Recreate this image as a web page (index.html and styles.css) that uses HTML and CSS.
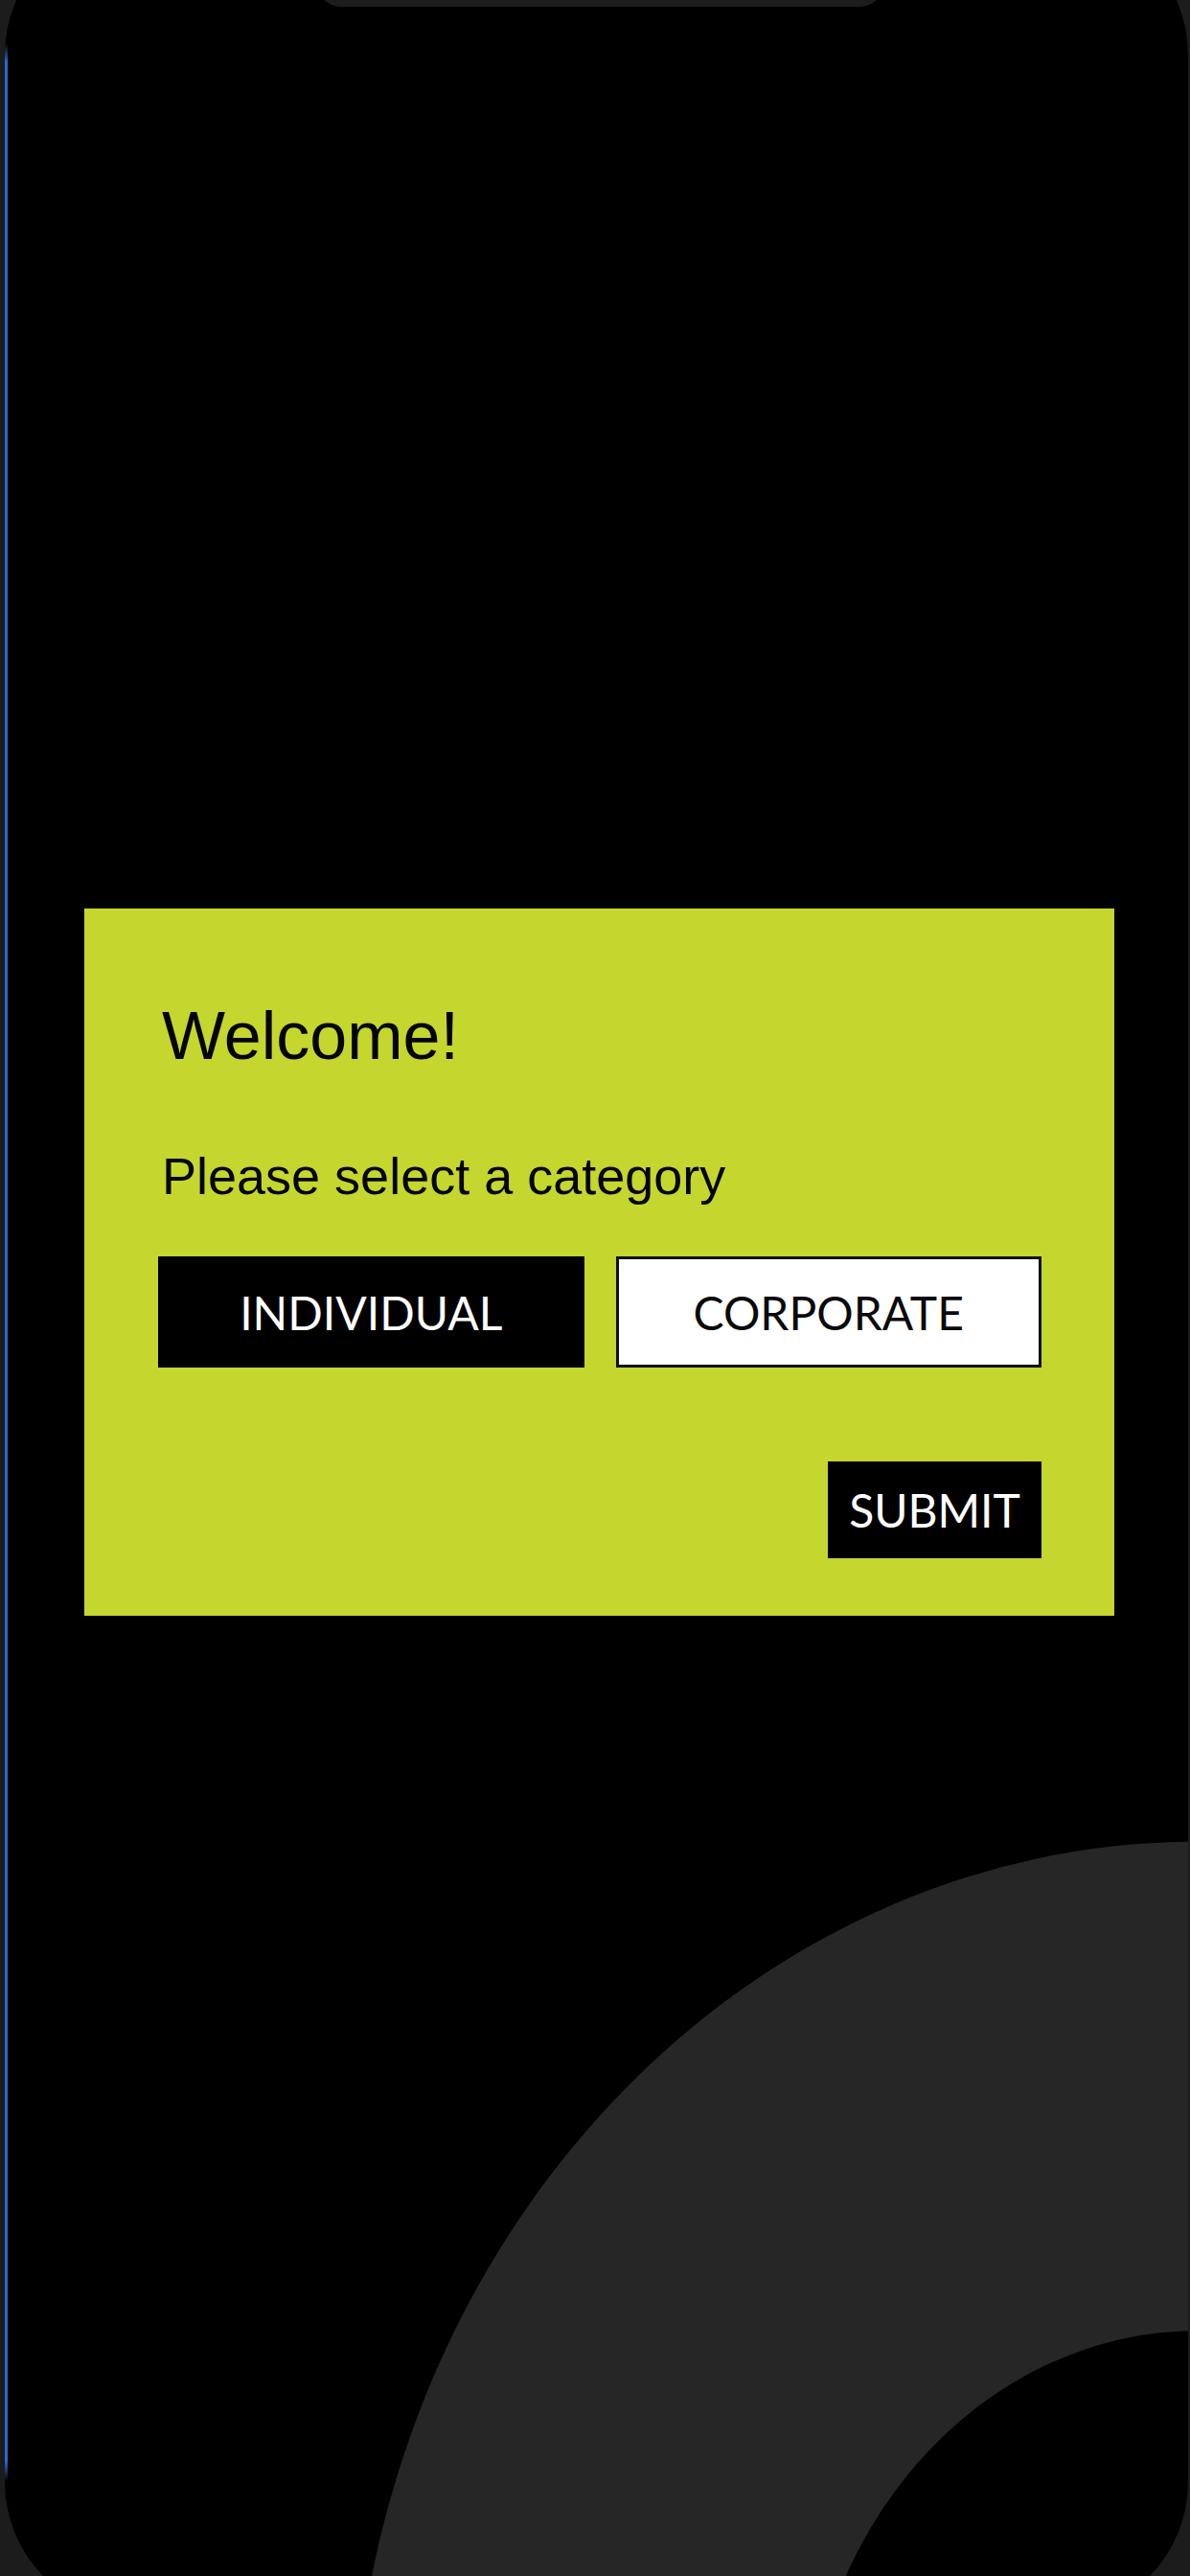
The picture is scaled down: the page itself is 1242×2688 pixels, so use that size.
FILE: index.html
```html
<!DOCTYPE html>
<html lang="en">
<head>
<meta charset="utf-8">
<title>Welcome</title>
<link rel="stylesheet" href="styles.css">
</head>
<body>
<div class="screen">
  <div class="notch"></div>
  <div class="edge-glow"></div>
  <svg class="ring" viewBox="0 0 1242 2688" width="1242" height="2688" aria-hidden="true">
    <path fill="#262626" fill-rule="evenodd" d="M367 2900 A883 978 0 1 1 2133 2900 A883 978 0 1 1 367 2900 Z M838 2900 A412 468 0 1 0 1662 2900 A412 468 0 1 0 838 2900 Z"/>
  </svg>
  <section class="card">
    <h1 class="title">Welcome!</h1>
    <p class="subtitle">Please select a category</p>
    <div class="choices">
      <button class="choice choice-active" type="button">INDIVIDUAL</button>
      <button class="choice choice-outline" type="button">CORPORATE</button>
    </div>
    <div class="actions">
      <button class="submit" type="button">SUBMIT</button>
    </div>
  </section>
</div>
</body>
</html>
```
FILE: styles.css
```css
html, body {
  margin: 0;
  padding: 0;
  height: 2688px;
  overflow: hidden;
  background: #1c1c1c;
}

body {
  font-family: "Liberation Sans", Arial, sans-serif;
}

.screen {
  position: relative;
  box-sizing: border-box;
  margin: -83px 2px 0 5px;
  height: 2813px;
  border-radius: 140px;
  background: #000;
  overflow: hidden;
  padding-top: 1031px;
}

.notch {
  position: absolute;
  top: 0;
  left: 325px;
  width: 593px;
  height: 90px;
  background: #1d1d1d;
  border-radius: 0 0 26px 26px;
  z-index: 2;
}

.edge-glow {
  position: absolute;
  left: 0;
  top: 128px;
  width: 3px;
  height: 2545px;
  background: linear-gradient(to bottom, rgba(42,108,204,0) 0, #2a6ccc 20px, #2a6ccc calc(100% - 22px), rgba(42,108,204,0) 100%);
  z-index: 2;
}

.ring {
  position: absolute;
  left: -5px;
  top: 83px;
  width: 1242px;
  height: 2688px;
  pointer-events: none;
}

.card {
  position: relative;
  box-sizing: border-box;
  margin-left: 83px;
  width: 1075px;
  height: 738px;
  background: #c5d62e;
  padding: 93px 76px 60px 77px;
  display: flex;
  flex-direction: column;
}

.title {
  margin: 0;
  font-size: 70px;
  line-height: 80px;
  font-weight: 400;
  color: #050505;
  padding-left: 4px;
}

.subtitle {
  margin: 76px 0 0;
  font-size: 54px;
  line-height: 60px;
  color: #050505;
  padding-left: 4px;
}

.choices {
  margin-top: 54px;
  display: grid;
  grid-template-columns: 1fr 1fr;
  column-gap: 33px;
}

.choice {
  box-sizing: border-box;
  height: 116px;
  margin: 0;
  padding: 0;
  font-family: Lato, "Liberation Sans", sans-serif;
  font-size: 48px;
  font-weight: 400;
  display: flex;
  align-items: center;
  justify-content: center;
  cursor: pointer;
}

.choice-active {
  background: #000;
  color: #fff;
  border: none;
}

.choice-outline {
  background: #fff;
  color: #0a0a0a;
  border: 3px solid #111;
}

.actions {
  margin-top: 98px;
  display: flex;
  justify-content: flex-end;
}

.submit {
  box-sizing: border-box;
  height: 101px;
  width: 223px;
  margin: 0;
  padding: 0;
  background: #000;
  color: #fff;
  border: none;
  font-family: Lato, "Liberation Sans", sans-serif;
  font-size: 48px;
  display: flex;
  align-items: center;
  justify-content: center;
  cursor: pointer;
}
```
